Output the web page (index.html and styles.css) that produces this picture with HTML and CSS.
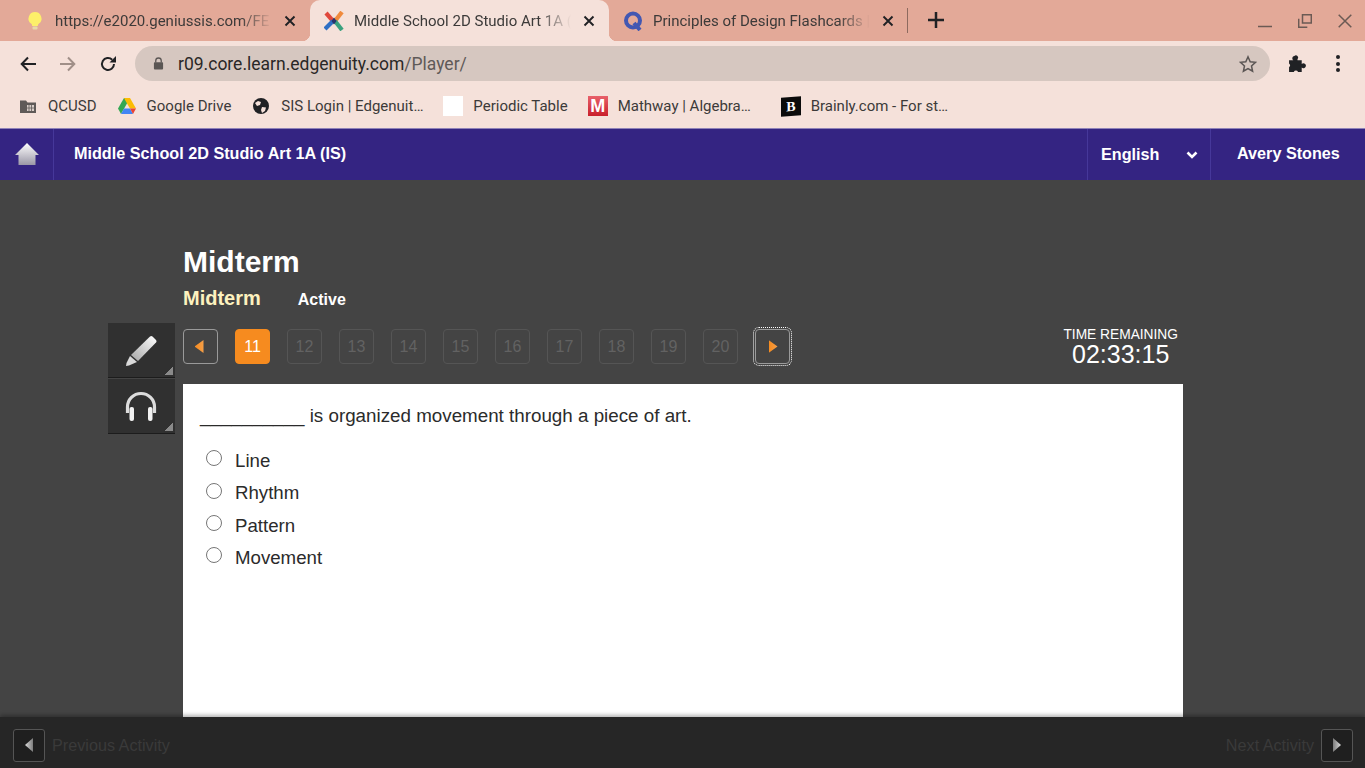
FILE: index.html
```html
<!DOCTYPE html>
<html lang="en">
<head>
    <meta charset="UTF-8">
    <meta name="viewport" content="width=device-width, initial-scale=1.0">
    <title>Middle School 2D Studio Art 1A (IS)</title>
    <link rel="stylesheet" href="styles.css">
</head>
<body>
    <!-- Browser tabs -->
    <div class="tabstrip">
        <div class="tab tab-first">
            <svg class="favicon" viewBox="0 0 20 20"><path d="M10 1a6.500 6.500 0 0 0-4 11.600c.8.700 1.200 1.400 1.200 2.400h5.600c0-1 .4-1.700 1.200-2.400A6.500 6.500 0 0 0 10 1z" fill="#fdf06a"/><rect x="7.500" y="15.500" width="5" height="3" rx="1" fill="#e8d9a8"/></svg>
            <span class="tab-title">https://e2020.geniussis.com/FE</span>
            <svg class="tab-close" viewBox="0 0 12 12"><path d="M1.500 1.500l9 9M10.500 1.500l-9 9"/></svg>
        </div>
        <div class="tab tab-active">
            <svg class="favicon" viewBox="0 0 20 20" fill="none" stroke-width="4.200"><path d="M2 2l7 8" stroke="#e0473c"/><path d="M18 1l-7 9" stroke="#f08a3c"/><path d="M1 18l8-8" stroke="#2f6fc4"/><path d="M18 19l-7-9" stroke="#3aa17e"/><path d="M10 6.500L7.500 10l2.500 3.500 2.500-3.500z" fill="#27346e" stroke="none"/></svg>
            <span class="tab-title">Middle School 2D Studio Art 1A (</span>
            <svg class="tab-close" viewBox="0 0 12 12"><path d="M1.500 1.500l9 9M10.500 1.500l-9 9"/></svg>
        </div>
        <div class="tab">
            <svg class="favicon" viewBox="0 0 20 20" fill="none"><circle cx="10" cy="9.500" r="7" stroke="#4257b2" stroke-width="4"/><path d="M11 12l6 7" stroke="#4257b2" stroke-width="4"/></svg>
            <span class="tab-title">Principles of Design Flashcards |</span>
            <svg class="tab-close" viewBox="0 0 12 12"><path d="M1.500 1.500l9 9M10.500 1.500l-9 9"/></svg>
        </div>
        <span class="tab-sep"></span>
        <svg class="new-tab" viewBox="0 0 16 16"><path d="M8 0v16M0 8h16"/></svg>
        <div class="window-btns">
            <svg class="win-btn" viewBox="0 0 14 14"><path d="M0 12.500h14"/></svg>
            <svg class="win-btn" viewBox="0 0 14 14"><path d="M4.500 .7h8.800v8.300h-8.800z"/><path d="M.7 4.800v8.500h8.600"/></svg>
            <svg class="win-btn" viewBox="0 0 14 14"><path d="M.7 .7l12.600 12.600M13.300 .7l-12.600 12.600"/></svg>
        </div>
    </div>

    <!-- Address bar -->
    <div class="toolbar">
        <svg class="tool-icon" viewBox="0 0 16 16"><path d="M16 8H2M8 1.500L1.700 8 8 14.500" fill="none" stroke="#202124" stroke-width="2"/></svg>
        <svg class="tool-icon" viewBox="0 0 16 16"><path d="M0 8h14M8 1.500L14.300 8 8 14.500" fill="none" stroke="#a08f88" stroke-width="2"/></svg>
        <svg class="tool-icon" viewBox="0 0 16 16"><path d="M14 8a6 6 0 1 1-1.800-4.300" fill="none" stroke="#202124" stroke-width="2"/><path d="M16 0v6.500H9.500z" fill="#202124"/></svg>
        <div class="omnibox">
            <svg class="lock" viewBox="0 0 12 14"><path d="M3 6V4a3 3 0 0 1 6 0v2" fill="none" stroke="#5b5654" stroke-width="1.400"/><rect x="1" y="5.500" width="10" height="8" rx="1" fill="#5b5654"/></svg>
            <span class="url">r09.core.learn.edgenuity.com<span class="url-path">/Player/</span></span>
            <svg class="star" viewBox="0 0 18 18"><path d="M9 1.800l2.200 4.900 5.300.6-4 3.600 1.100 5.300L9 13.500l-4.600 2.700 1.100-5.300-4-3.600 5.300-.6z" fill="none" stroke="#5b5654" stroke-width="1.500"/></svg>
        </div>
        <svg class="puzzle" viewBox="0 0 18 18"><path d="M1 6h4a2.200 2.200 0 0 1 1-4 2.200 2.200 0 0 1 3 0 2.200 2.200 0 0 1 0 3V6h4v3.500a2.400 2.400 0 0 1 4 1.500 2.400 2.400 0 0 1-4 1.800V17H9.500a2.200 2.200 0 0 0-4 0H1v-4.500a2.300 2.300 0 0 0 0-3.500z" fill="#202124"/></svg>
        <div class="menu-dots"><i></i><i></i><i></i></div>
    </div>

    <!-- Bookmarks -->
    <div class="bookmarks">
        <div class="bookmark">
            <svg class="bm-icon" viewBox="0 0 16 16"><path d="M0 2.500h6l1.500 2H16V15H0z" fill="#5f5a58"/><path d="M7 7h7v6H7z" fill="#d8cdc8"/><path d="M9 7v6M11.500 7v6M7 10h7" stroke="#5f5a58" stroke-width=".8"/></svg>
            <span>QCUSD</span>
        </div>
        <div class="bookmark bookmark-drive">
            <svg class="bm-icon bm-drive" viewBox="0 0 18 16"><path d="M6 0h6l6 10.500h-6L9 5.500 6 5z" fill="#fbbc04"/><path d="M6 0l3 5.500-6 10.500-3-5.500z" fill="#34a853"/><path d="M6 10.500h6L15 16H3z" fill="#4285f4"/><path d="M12 10.500h6L15 16z" fill="#ea4335"/></svg>
            <span>Google Drive</span>
        </div>
        <div class="bookmark">
            <svg class="bm-icon" viewBox="0 0 16 16"><circle cx="8" cy="8" r="8" fill="#202124"/><path d="M2 5l3-2 3 1-1 3-3 1zM9 9l4 .5L12 13l-3 2-1-3z" fill="#f5e1da"/></svg>
            <span class="bm-text-sis">SIS Login | Edgenuit…</span>
        </div>
        <div class="bookmark bookmark-wide">
            <span class="bm-blank"></span>
            <span>Periodic Table</span>
        </div>
        <div class="bookmark bookmark-wide bookmark-math">
            <span class="bm-mathway">M</span>
            <span class="bm-text-math">Mathway | Algebra…</span>
        </div>
        <div class="bookmark bookmark-wide">
            <span class="bm-brainly">B</span>
            <span>Brainly.com - For st…</span>
        </div>
    </div>

    <!-- Course header -->
    <header class="course-bar">
        <div class="home-cell">
            <svg class="home-icon" viewBox="0 0 24 24"><defs><linearGradient id="homeFill" x1="0" y1="0" x2="0" y2="1"><stop offset="0" stop-color="#ffffff"/><stop offset="1" stop-color="#9a97a6"/></linearGradient></defs><path d="M12 1L24 13h-3.500v10h-17V13H0z" fill="url(#homeFill)"/></svg>
        </div>
        <div class="course-title">Middle School 2D Studio Art 1A (IS)</div>
        <div class="lang-cell">
            <span>English</span>
            <svg class="chevron" viewBox="0 0 12 8"><path d="M1.500 1.500L6 6l4.500-4.500" fill="none" stroke="#fff" stroke-width="2.600"/></svg>
        </div>
        <div class="user-cell">Avery Stones</div>
    </header>

    <main class="stage">
        <div class="activity-head">
            <h1>Midterm</h1>
            <div class="subhead">
                <span class="sub-title">Midterm</span>
                <span class="sub-status">Active</span>
            </div>
        </div>
        <div class="work">
            <div class="tools">
                <div class="tool">
                    <svg class="tool-svg" viewBox="0 0 32 32"><defs><linearGradient id="toolFill" x1="1" y1="0" x2="0" y2="1"><stop offset="0" stop-color="#ffffff"/><stop offset="1" stop-color="#a5a5a5"/></linearGradient></defs><path d="M25 1.500a2 2 0 0 1 2.500 0l3.500 3.500a2 2 0 0 1 0 2.500L13 26l-7-6z" fill="url(#toolFill)"/><path d="M5 21l7 6-8 3.500-3 .5.500-3z" fill="#d9d9d9"/></svg>
                </div>
                <div class="tool">
                    <svg class="tool-svg" viewBox="0 0 32 32"><path d="M2.500 22v-6a13.500 13.500 0 0 1 27 0v6" fill="none" stroke="#dcdcdc" stroke-width="3.200"/><rect x="4.500" y="16" width="4.500" height="14" rx="2" fill="#f2f2f2"/><rect x="23" y="16" width="4.500" height="14" rx="2" fill="#f2f2f2"/></svg>
                </div>
            </div>
            <div class="player">
                <div class="nav-row">
                    <div class="pager">
                        <div class="page-btn page-arrow"><span class="tri-left"></span></div>
                        <div class="page-btn page-current">11</div>
                        <div class="page-btn">12</div>
                        <div class="page-btn">13</div>
                        <div class="page-btn">14</div>
                        <div class="page-btn">15</div>
                        <div class="page-btn">16</div>
                        <div class="page-btn">17</div>
                        <div class="page-btn">18</div>
                        <div class="page-btn">19</div>
                        <div class="page-btn">20</div>
                        <div class="page-btn page-arrow page-focus"><span class="tri-right"></span></div>
                    </div>
                    <div class="timer">
                        <div class="timer-label">TIME REMAINING</div>
                        <div class="timer-value">02:33:15</div>
                    </div>
                </div>
                <div class="content">
                    <p class="question">__________ is organized movement through a piece of art.</p>
                    <label class="answer"><input type="radio" name="q11"><span>Line</span></label>
                    <label class="answer"><input type="radio" name="q11"><span>Rhythm</span></label>
                    <label class="answer"><input type="radio" name="q11"><span>Pattern</span></label>
                    <label class="answer"><input type="radio" name="q11"><span>Movement</span></label>
                </div>
            </div>
        </div>
    </main>

    <footer class="activity-bar">
        <div class="foot-btn"><span class="foot-tri-left"></span></div>
        <span class="foot-label">Previous Activity</span>
        <span class="foot-label foot-next">Next Activity</span>
        <div class="foot-btn"><span class="foot-tri-right"></span></div>
    </footer>
</body>
</html>
```

FILE: styles.css
```css
:root {
    --strip: #e3a998;
    --chrome: #f5e1da;
    --ink: #202124;
    --course: #342482;
    --stage: #444444;
    --orange: #f68b1f;
}

* {
    box-sizing: border-box;
}

body {
    margin: 0;
    width: 1365px;
    height: 768px;
    display: flex;
    flex-direction: column;
    overflow: hidden;
    background: var(--stage);
    font-family: "Liberation Sans", Arial, sans-serif;
}

/* Browser tabs */
.tabstrip {
    height: 41px;
    flex: none;
    display: flex;
    align-items: center;
    background: var(--strip);
    font-family: Roboto, sans-serif;
    font-size: 15px;
    color: #3c3a39;
}

.tab {
    width: 299px;
    height: 41px;
    flex: none;
    display: flex;
    align-items: center;
    padding: 0 14px;
    position: relative;
}

.tab-first {
    width: 310px;
    padding-left: 25px;
}

.tab-active {
    background: var(--chrome);
    border-radius: 10px 10px 0 0;
}

.tab-active::before,
.tab-active::after {
    content: '';
    position: absolute;
    bottom: 0;
    width: 8px;
    height: 8px;
}

.tab-active::before {
    left: -8px;
    background: radial-gradient(circle at 0 0, transparent 8px, var(--chrome) 8.5px);
}

.tab-active::after {
    right: -8px;
    background: radial-gradient(circle at 100% 0, transparent 8px, var(--chrome) 8.5px);
}

.favicon {
    width: 20px;
    height: 20px;
    flex: none;
    margin-right: 10px;
}

.tab-title {
    width: 217px;
    flex: none;
    white-space: nowrap;
    -webkit-mask-image: linear-gradient(90deg, #000 185px, transparent 217px);
    mask-image: linear-gradient(90deg, #000 185px, transparent 217px);
}

.tab-close {
    width: 12px;
    height: 12px;
    margin-left: 12px;
    fill: none;
    stroke: #202124;
    stroke-width: 1.9;
}

.tab-sep {
    width: 1px;
    height: 25px;
    margin-left: -1px;
    background: #8d6a5f;
}

.new-tab {
    width: 16px;
    height: 16px;
    margin: -1px 0 0 20px;
    fill: none;
    stroke: #202124;
    stroke-width: 2.5;
}

.window-btns {
    margin-left: auto;
    margin-right: 13px;
    display: flex;
    gap: 26px;
}

.win-btn {
    width: 14px;
    height: 14px;
    fill: none;
    stroke: #6b5a54;
    stroke-width: 1.5;
}

/* Address bar */
.toolbar {
    height: 45px;
    flex: none;
    display: flex;
    align-items: center;
    padding-left: 20px;
    background: var(--chrome);
}

.tool-icon {
    width: 16px;
    height: 16px;
    margin-right: 24px;
}

.omnibox {
    width: 1135px;
    height: 35px;
    margin-left: -5px;
    display: flex;
    align-items: center;
    padding: 0 13px 0 18px;
    border-radius: 18px;
    background: #d6c7c0;
}

.lock {
    width: 11px;
    height: 13px;
    margin-right: 14px;
}

.url {
    font-family: Roboto, sans-serif;
    font-size: 17.5px;
    color: #2a2827;
}

.url-path {
    color: #5f5a58;
}

.star {
    width: 18px;
    height: 18px;
    margin-left: auto;
}

.puzzle {
    width: 19px;
    height: 19px;
    margin-left: 18px;
}

.menu-dots {
    margin-left: 29px;
    display: flex;
    flex-direction: column;
    gap: 2.5px;
}

.menu-dots i {
    width: 4px;
    height: 4px;
    border-radius: 50%;
    background: var(--ink);
}

/* Bookmarks */
.bookmarks {
    height: 42px;
    flex: none;
    display: flex;
    align-items: center;
    gap: 21px;
    padding: 0 0 2px 20px;
    background: var(--chrome);
    font-family: Roboto, sans-serif;
    font-size: 15px;
    color: #3c3a39;
}

.bookmark {
    display: flex;
    align-items: center;
    gap: 12px;
    white-space: nowrap;
}

.bookmark-drive {
    gap: 11px;
    margin-right: 1px;
}

.bookmark-wide {
    gap: 10px;
}

.bookmark-math {
    margin-left: -1px;
}

.bm-icon {
    width: 16px;
    height: 16px;
    flex: none;
}

.bm-drive {
    width: 18px;
}

.bm-text-sis {
    width: 141px;
}

.bm-text-math {
    width: 141px;
    margin-right: 1px;
}

.bm-blank {
    width: 20px;
    height: 20px;
    background: #fff;
}

.bm-mathway {
    width: 20px;
    height: 20px;
    background: linear-gradient(#e8606a, #c9202c);
    color: #fff;
    font-family: "Liberation Sans", sans-serif;
    font-size: 18px;
    font-weight: 700;
    line-height: 20px;
    text-align: center;
}

.bm-brainly {
    width: 20px;
    height: 19px;
    background: #0b0b0b;
    color: #fff;
    font-family: "Liberation Serif", serif;
    font-size: 14px;
    font-weight: 700;
    line-height: 19px;
    text-align: center;
    transform: skewY(-5deg);
}

/* Course header */
.course-bar {
    height: 52px;
    flex: none;
    display: flex;
    align-items: stretch;
    background: var(--course);
    border-top: 1px solid #8f82b8;
    color: #fff;
    font-size: 16.2px;
    font-weight: 700;
    line-height: 49px;
}

.home-cell {
    width: 54px;
    display: flex;
    align-items: center;
    justify-content: center;
    border-right: 1px solid #46389a;
}

.home-icon {
    width: 24px;
    height: 24px;
    margin-top: -2px;
}

.course-title {
    margin-left: 20px;
    margin-right: auto;
}

.lang-cell {
    width: 124px;
    display: flex;
    align-items: center;
    padding: 0 12px 0 13px;
    justify-content: space-between;
    border-left: 1px solid #46389a;
    border-right: 1px solid #46389a;
}

.chevron {
    width: 12px;
    height: 8px;
}

.user-cell {
    width: 154px;
    padding-left: 26px;
}

/* Activity */
.stage {
    flex: 1;
    min-height: 0;
    display: flex;
    flex-direction: column;
    padding: 65px 0 0 108px;
    overflow: hidden;
}

.activity-head {
    height: 78px;
    flex: none;
    margin-left: 75px;
    color: #fff;
    font-weight: 700;
}

h1 {
    margin: 0;
    font-size: 30px;
    line-height: 34px;
}

.subhead {
    display: flex;
    align-items: baseline;
    gap: 37px;
    margin-top: 8px;
}

.sub-title {
    font-size: 20px;
    color: #fdf2bf;
}

.sub-status {
    font-size: 16px;
}

.work {
    flex: 1;
    min-height: 0;
    display: flex;
    gap: 8px;
}

.tools {
    width: 67px;
    flex: none;
}

.tool {
    width: 67px;
    height: 55px;
    margin-bottom: 1px;
    display: flex;
    align-items: center;
    justify-content: center;
    background:
        linear-gradient(135deg, transparent 50%, #8a8a8a 50%) right 2px bottom 2px / 8px 8px no-repeat,
        #303030;
    border-bottom: 1px solid #1c1c1c;
}

.tool-svg {
    width: 32px;
    height: 32px;
    margin: 2px 2px 0 0;
}

.player {
    width: 1000px;
    display: flex;
    flex-direction: column;
}

.nav-row {
    height: 61px;
    flex: none;
    display: flex;
    justify-content: space-between;
    align-items: flex-start;
    padding: 6px 5px 0 0;
}

.pager {
    display: flex;
    gap: 17px;
}

.page-btn {
    width: 35px;
    height: 35px;
    display: flex;
    align-items: center;
    justify-content: center;
    border: 1px solid #555;
    border-radius: 4px;
    color: #626262;
    font-size: 16px;
}

.page-current {
    background: var(--orange);
    border-color: var(--orange);
    color: #fff;
}

.page-arrow {
    border-color: #9a9a9a;
}

.page-focus {
    outline: 1px dotted #fff;
    outline-offset: 1px;
}

.tri-left,
.tri-right {
    width: 9px;
    height: 13px;
    background: linear-gradient(90deg, #f68b1f, #f5a04a);
}

.tri-left {
    margin-right: 3px;
    clip-path: polygon(100% 0, 100% 100%, 0 50%);
}

.tri-right {
    margin-left: 1px;
    clip-path: polygon(0 0, 100% 50%, 0 100%);
}

.timer {
    color: #fff;
    text-align: center;
}

.timer-label {
    font-size: 13.75px;
    line-height: 13px;
    margin-top: -1px;
}

.timer-value {
    font-size: 25px;
    line-height: 27px;
}

.content {
    flex: 1;
    min-height: 0;
    padding: 20px 17px 0;
    background: #fff;
    color: #2b2b2b;
    font-size: 18.67px;
}

.question {
    margin: 0 0 17.7px;
    font-size: 18.8px;
    line-height: 23px;
}

.answer {
    height: 32.33px;
    display: flex;
    align-items: center;
}

.answer input {
    width: 16px;
    height: 16px;
    flex: none;
    margin: -5px 13px 0 6px;
}

/* Bottom bar */
.activity-bar {
    height: 51px;
    flex: none;
    display: flex;
    align-items: center;
    padding: 5px 12px 0 13px;
    position: relative;
    background: #262626;
    box-shadow: 0 -2px 4px rgba(0, 0, 0, .3);
    font-size: 16.2px;
    color: #3a3a3a;
}

.foot-btn {
    width: 32px;
    height: 33px;
    display: flex;
    align-items: center;
    justify-content: center;
    border: 1px solid #555;
    border-radius: 3px;
    background: #1f1f1f;
}

.foot-tri-left,
.foot-tri-right {
    width: 8px;
    height: 14px;
}

.foot-tri-left {
    background: linear-gradient(90deg, #dcdcdc, #7c7c7c);
    clip-path: polygon(100% 0, 100% 100%, 0 50%);
}

.foot-tri-right {
    background: linear-gradient(90deg, #7c7c7c, #dcdcdc);
    clip-path: polygon(0 0, 100% 50%, 0 100%);
}

.foot-label {
    margin: 0 7px;
}

.foot-next {
    margin-left: auto;
}
```
